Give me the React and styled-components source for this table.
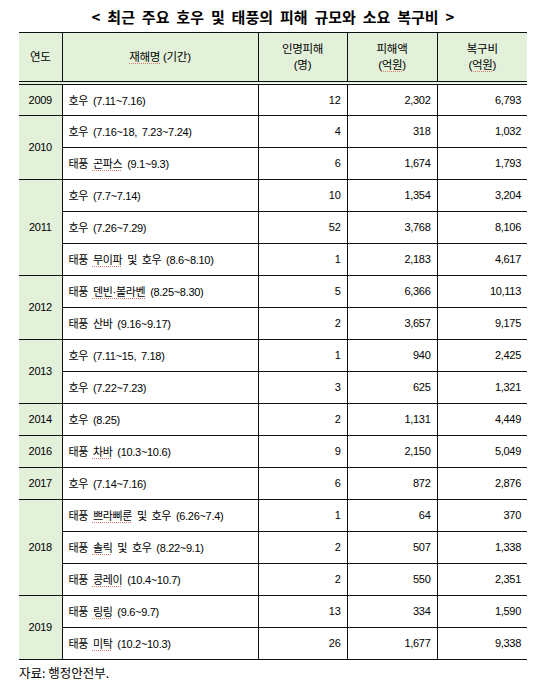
import React from 'react';
import styled, { createGlobalStyle } from 'styled-components';

const COLORS = {
  green: '#e3f0da',
  line: '#111',
  text: '#000',
  squiggle: '#e07a6a',
};

const GlobalStyle = createGlobalStyle`
  body {
    margin: 0;
    background: #fff;
    font-family: "Liberation Sans", "Noto Sans CJK KR", sans-serif;
    color: ${COLORS.text};
  }
`;

const Page = styled.div`
  width: 539px;
  height: 683px;
  padding: 8px 12px 0 19px;
  box-sizing: border-box;
`;

const Title = styled.h1`
  margin: 0 0 7px;
  text-align: center;
  font-family: "Noto Sans CJK KR", sans-serif;
  font-size: 15px;
  line-height: 17px;
  font-weight: 700;
  word-spacing: 3.5px;
`;

const Table = styled.table`
  width: 508px;
  border-collapse: collapse;
  table-layout: fixed;
  font-size: 11px;
  letter-spacing: -0.3px;
`;

const HeadCell = styled.th`
  height: 48px;
  padding: 0;
  background: ${COLORS.green};
  font-weight: 400;
  font-size: 11.5px;
  line-height: 16px;
  text-align: center;
  border-top: 1px solid ${COLORS.line};
  border-bottom: 4px double ${COLORS.line};
  & + & {
    border-left: 1px solid ${COLORS.line};
  }
`;

const Row = styled.tr`
  height: 32px;
  border-bottom: 1px solid ${COLORS.line};
`;

const YearCell = styled.td`
  padding: 0;
  background: ${COLORS.green};
  text-align: center;
  border-right: 1px solid ${COLORS.line};
  border-bottom: 1px solid ${COLORS.line};
`;

const NameCell = styled.td`
  padding: 0 0 0 6px;
  text-align: left;
  white-space: nowrap;
  word-spacing: 2px;
`;

const NumCell = styled.td`
  padding: 0 6px 0 0;
  text-align: right;
  border-left: 1px solid ${COLORS.line};
`;

const Spell = styled.span`
  text-decoration: underline dotted ${COLORS.squiggle};
  text-decoration-thickness: 1px;
  text-underline-offset: 2px;
`;

const Source = styled.p`
  margin: 5px 0 0;
  font-family: "Noto Sans CJK KR", sans-serif;
  font-size: 12.5px;
  line-height: 16px;
`;

const DATA = [
  { year: '2009', rows: [[['호우 (7.11~7.16)'], 12, '2,302', '6,793']] },
  {
    year: '2010',
    rows: [
      [['호우 (7.16~18, 7.23~7.24)'], 4, '318', '1,032'],
      [['태풍 ', { s: '곤파스' }, ' (9.1~9.3)'], 6, '1,674', '1,793'],
    ],
  },
  {
    year: '2011',
    rows: [
      [['호우 (7.7~7.14)'], 10, '1,354', '3,204'],
      [['호우 (7.26~7.29)'], 52, '3,768', '8,106'],
      [['태풍 ', { s: '무이파' }, ' 및 호우 (8.6~8.10)'], 1, '2,183', '4,617'],
    ],
  },
  {
    year: '2012',
    rows: [
      [['태풍 ', { s: '덴빈·볼라벤' }, ' (8.25~8.30)'], 5, '6,366', '10,113'],
      [['태풍 산바 (9.16~9.17)'], 2, '3,657', '9,175'],
    ],
  },
  {
    year: '2013',
    rows: [
      [['호우 (7.11~15, 7.18)'], 1, '940', '2,425'],
      [['호우 (7.22~7.23)'], 3, '625', '1,321'],
    ],
  },
  { year: '2014', rows: [[['호우 (8.25)'], 2, '1,131', '4,449']] },
  { year: '2016', rows: [[['태풍 ', { s: '차바' }, ' (10.3~10.6)'], 9, '2,150', '5,049']] },
  { year: '2017', rows: [[['호우 (7.14~7.16)'], 6, '872', '2,876']] },
  {
    year: '2018',
    rows: [
      [['태풍 ', { s: '쁘라삐룬' }, ' 및 호우 (6.26~7.4)'], 1, '64', '370'],
      [['태풍 ', { s: '솔릭' }, ' 및 호우 (8.22~9.1)'], 2, '507', '1,338'],
      [['태풍 ', { s: '콩레이' }, ' (10.4~10.7)'], 2, '550', '2,351'],
    ],
  },
  {
    year: '2019',
    rows: [
      [['태풍 ', { s: '링링' }, ' (9.6~9.7)'], 13, '334', '1,590'],
      [['태풍 ', { s: '미탁' }, ' (10.2~10.3)'], 26, '1,677', '9,338'],
    ],
  },
];

const renderName = (parts) =>
  parts.map((p, i) =>
    typeof p === 'string' ? <React.Fragment key={i}>{p}</React.Fragment> : <Spell key={i}>{p.s}</Spell>
  );

const App = () => {
  return (
    <Page>
      <GlobalStyle />
      <Title>&lt; 최근 주요 호우 및 태풍의 피해 규모와 소요 복구비 &gt;</Title>
      <Table>
        <colgroup>
          <col style={{ width: 43 }} />
          <col style={{ width: 196 }} />
          <col style={{ width: 89 }} />
          <col style={{ width: 90 }} />
          <col style={{ width: 90 }} />
        </colgroup>
        <thead>
          <tr>
            <HeadCell>연도</HeadCell>
            <HeadCell>
              <Spell>재해명</Spell> (기간)
            </HeadCell>
            <HeadCell>
              인명피해
              <br />
              (명)
            </HeadCell>
            <HeadCell>
              피해액
              <br />
              (<Spell>억원</Spell>)
            </HeadCell>
            <HeadCell>
              복구비
              <br />
              (<Spell>억원</Spell>)
            </HeadCell>
          </tr>
        </thead>
        <tbody>
          {DATA.map((group) =>
            group.rows.map((row, i) => (
              <Row key={group.year + i}>
                {i === 0 && <YearCell rowSpan={group.rows.length}>{group.year}</YearCell>}
                <NameCell>{renderName(row[0])}</NameCell>
                <NumCell>{row[1]}</NumCell>
                <NumCell>{row[2]}</NumCell>
                <NumCell>{row[3]}</NumCell>
              </Row>
            ))
          )}
        </tbody>
      </Table>
      <Source>자료: 행정안전부.</Source>
    </Page>
  );
};

export default App;
